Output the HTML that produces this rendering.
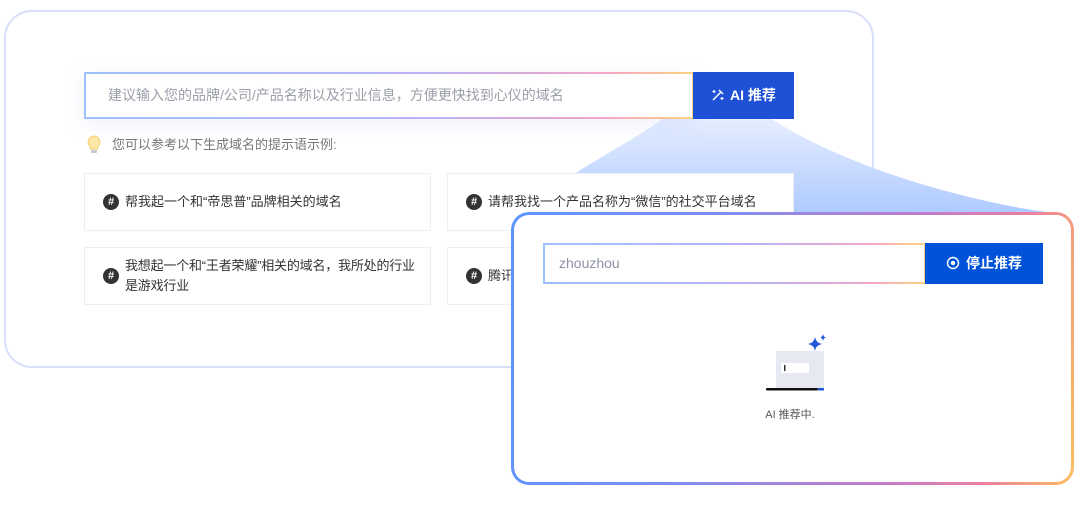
<!DOCTYPE html>
<html><head><meta charset="utf-8"><style>
*{box-sizing:border-box;margin:0;padding:0}
body{width:1080px;height:517px;background:#fff;position:relative;overflow:hidden;font-family:"Liberation Sans","Noto Sans CJK SC",sans-serif}
.outer{position:absolute;left:4px;top:10px;width:870px;height:358px;border:2px solid #d9defa;border-radius:28px;background:#fff}
.inp{position:absolute;left:84px;top:72px;width:610px;height:47px;padding:2px;background:linear-gradient(90deg,#9ec0ff,#b9b2f5 55%,#f0a6c8 85%,#ffd27f);box-shadow:0 6px 20px rgba(150,160,230,.15)}
.inp div{background:#fff;height:100%;font-size:14px;color:#9a9ea8;padding:0 22px;line-height:43px}
.btn{position:absolute;left:693px;top:72px;width:101px;height:47px;background:#1f51d6;color:#fff;font-size:14px;font-weight:bold;line-height:47px;text-align:center}
.hint{position:absolute;left:112px;top:137px;font-size:13px;color:#777;line-height:16px}
.card{position:absolute;width:347px;height:58px;border:1px solid #eceef2;background:#fff;font-size:13px;color:#333;display:flex;align-items:center;padding-left:40px;padding-right:8px;line-height:20px}
.card i{position:absolute;left:18px;top:50%;margin-top:-8px;width:16px;height:16px;border-radius:50%;background:#333;color:#fff;font-style:normal;font-size:11px;font-weight:bold;line-height:16px;text-align:center}
.panel{position:absolute;left:511px;top:212px;width:563px;height:273px;border-radius:18px;padding:3px;background:linear-gradient(100deg,#5b95ff 0%,#7f8ef0 35%,#c77cc7 70%,#ea7fa0 85%,#ffbe5c 100%)}
.panel>.in{background:#fff;border-radius:15px;width:100%;height:100%;position:relative}
.inp2{position:absolute;left:543px;top:243px;width:383px;height:41px;padding:2px;background:linear-gradient(90deg,#9ec0ff,#b9b2f5 55%,#f0a6c8 85%,#ffd27f)}
.inp2 div{background:#fff;height:100%;font-size:14px;color:#8d93a3;padding:0 14px;line-height:37px}
.btn2{position:absolute;left:925px;top:243px;width:118px;height:41px;background:#0052d9;color:#fff;font-size:14px;font-weight:bold;line-height:41px;text-align:center}
</style></head><body>
<div class="outer"></div>
<svg style="position:absolute;left:0;top:0" width="1080" height="517"><defs><linearGradient id="bg" x1="0" y1="0" x2="0" y2="1"><stop offset="0" stop-color="#e6eeff"/><stop offset="1" stop-color="#aecaff"/></linearGradient></defs>
<path d="M664 118 L770 118 C 850 170, 980 205, 1062 214 L 526 214 C 560 175, 620 150, 664 118 Z" fill="url(#bg)"/></svg>
<div class="inp"><div>建议输入您的品牌/公司/产品名称以及行业信息，方便更快找到心仪的域名</div></div>
<div class="btn"><svg width="14" height="14" viewBox="0 0 14 14" style="vertical-align:-2px;margin-right:5px"><path d="M2 12 L10 4 M8 2 L12 6" stroke="#fff" stroke-width="1.5" fill="none"/><path d="M3 2v3M1.5 3.5h3M11 9v3M9.5 10.5h3" stroke="#fff" stroke-width="1.2"/></svg>AI 推荐</div>
<svg style="position:absolute;left:86px;top:135px" width="16" height="20" viewBox="0 0 16 20"><path d="M8 1a6 6 0 0 0-3.5 10.8V14h7v-2.2A6 6 0 0 0 8 1z" fill="#fde7a8" stroke="#f3cd6b"/><rect x="5" y="15" width="6" height="3" rx="1" fill="#ccc"/></svg>
<div class="hint">您可以参考以下生成域名的提示语示例:</div>
<div class="card" style="left:84px;top:173px"><i>#</i>帮我起一个和“帝思普”品牌相关的域名</div>
<div class="card" style="left:447px;top:173px"><i>#</i>请帮我找一个产品名称为“微信”的社交平台域名</div>
<div class="card" style="left:84px;top:247px;padding-right:4px;letter-spacing:-0.2px"><i>#</i>我想起一个和“王者荣耀”相关的域名，我所处的行业是游戏行业</div>
<div class="card" style="left:447px;top:247px"><i>#</i>腾讯</div>
<div class="panel"><div class="in"></div></div>
<div class="inp2"><div>zhouzhou</div></div>
<div class="btn2"><svg width="14" height="14" viewBox="0 0 14 14" style="vertical-align:-2px;margin-right:6px"><circle cx="7" cy="7" r="5.5" stroke="#fff" stroke-width="1.4" fill="none"/><circle cx="7" cy="7" r="2.2" fill="#fff"/></svg>停止推荐</div>
<svg style="position:absolute;left:762px;top:333px" width="70" height="60" viewBox="0 0 70 60">
<rect x="14" y="18" width="48" height="38" fill="#e6e9f2"/>
<rect x="19" y="30" width="28" height="10" fill="#fff"/><rect x="22" y="32" width="1.5" height="6" fill="#333"/>
<rect x="4" y="55" width="52" height="2.5" rx="1" fill="#111"/><rect x="56" y="55" width="6" height="2.5" fill="#2257d6"/>
<path d="M53 4 Q54 10 60 11 Q54 12 53 18 Q52 12 46 11 Q52 10 53 4Z" fill="#2257d6"/>
<path d="M61 1 Q61.5 4 64 4.5 Q61.5 5 61 8 Q60.5 5 58 4.5 Q60.5 4 61 1Z" fill="#2257d6"/></svg>
<div style="position:absolute;left:740px;top:406px;width:100px;text-align:center;font-size:11px;color:#555">AI 推荐中.</div>
</body></html>
